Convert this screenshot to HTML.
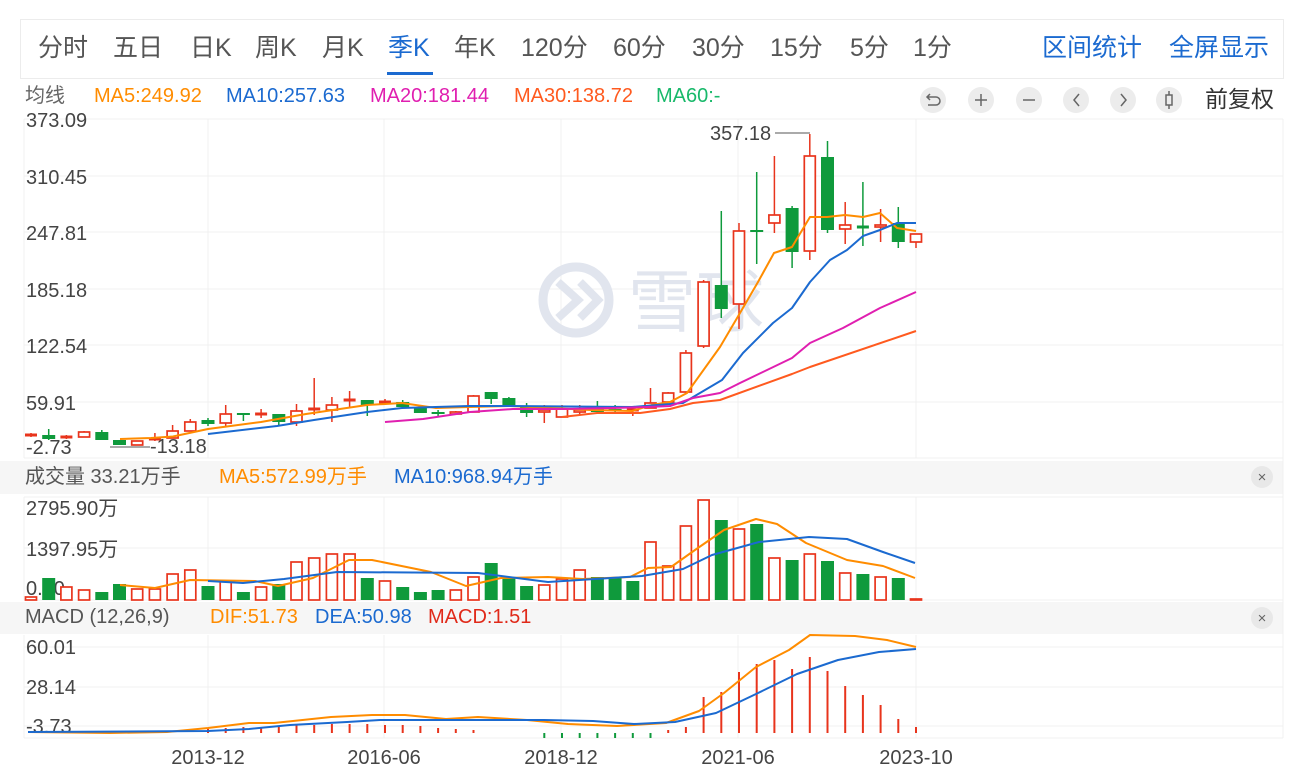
<!DOCTYPE html>
<html><head><meta charset="utf-8">
<style>
body{margin:0;width:1303px;height:768px;background:#fff;overflow:hidden;position:relative;font-family:"Liberation Sans","Noto Sans CJK SC",sans-serif;}
.t{position:absolute;white-space:nowrap;line-height:1.15;}
.tab{top:34px;font-size:25px;color:#555;}
.lg{top:85px;font-size:20px;}
</style></head><body>
<div style="position:absolute;left:20px;top:19px;width:1262px;height:58px;border:1px solid #ececec;"></div>
<div class="t tab" style="left:38px;">分时</div>
<div class="t tab" style="left:113px;">五日</div>
<div class="t tab" style="left:190px;">日K</div>
<div class="t tab" style="left:255px;">周K</div>
<div class="t tab" style="left:322px;">月K</div>
<div class="t tab" style="left:388px;color:#1b6ad0;">季K</div>
<div style="position:absolute;left:387px;top:72px;width:46px;height:3px;background:#1b6ad0;"></div>
<div class="t tab" style="left:454px;">年K</div>
<div class="t tab" style="left:521px;">120分</div>
<div class="t tab" style="left:613px;">60分</div>
<div class="t tab" style="left:692px;">30分</div>
<div class="t tab" style="left:770px;">15分</div>
<div class="t tab" style="left:850px;">5分</div>
<div class="t tab" style="left:913px;">1分</div>
<div class="t tab" style="left:1042px;color:#1b6ad0;">区间统计</div>
<div class="t tab" style="left:1169px;color:#1b6ad0;">全屏显示</div>

<div class="t lg" style="left:25px;color:#666;">均线</div>
<div class="t lg" style="left:94px;color:#ff8c00;">MA5:249.92</div>
<div class="t lg" style="left:226px;color:#1b6ad0;">MA10:257.63</div>
<div class="t lg" style="left:370px;color:#e01fb0;">MA20:181.44</div>
<div class="t lg" style="left:514px;color:#ff5a1f;">MA30:138.72</div>
<div class="t lg" style="left:656px;color:#19b96b;">MA60:-</div>
<div class="t" style="top:86px;left:1205px;font-size:23px;color:#333;">前复权</div>

<div style="position:absolute;left:0;top:461px;width:1283px;height:33px;background:#f6f6f6;"></div>
<div class="t" style="top:466px;left:25px;font-size:20px;color:#555;">成交量 33.21万手</div>
<div class="t" style="top:466px;left:219px;font-size:20px;color:#ff8c00;">MA5:572.99万手</div>
<div class="t" style="top:466px;left:394px;font-size:20px;color:#1b6ad0;">MA10:968.94万手</div>
<div style="position:absolute;left:0;top:602px;width:1283px;height:32px;background:#f6f6f6;"></div>
<div class="t" style="top:606px;left:25px;font-size:20px;color:#555;">MACD (12,26,9)</div>
<div class="t" style="top:606px;left:210px;font-size:20px;color:#ff8c00;">DIF:51.73</div>
<div class="t" style="top:606px;left:315px;font-size:20px;color:#1b6ad0;">DEA:50.98</div>
<div class="t" style="top:606px;left:428px;font-size:20px;color:#e02a1a;">MACD:1.51</div>

<svg id="s" width="1303" height="768" style="position:absolute;left:0;top:0" xmlns="http://www.w3.org/2000/svg"></svg>
<script>
var s=document.getElementById('s'),h='';
function L(x1,y1,x2,y2,c,w){h+='<line x1="'+x1+'" y1="'+y1+'" x2="'+x2+'" y2="'+y2+'" stroke="'+c+'" stroke-width="'+(w||1)+'"/>';}
function P(pts,c,w){h+='<polyline fill="none" stroke="'+c+'" stroke-width="'+(w||2)+'" stroke-linejoin="round" points="'+pts.map(function(p){return p.join(',')}).join(' ')+'"/>';}
function T(x,y,t,sz,c,a){h+='<text x="'+x+'" y="'+y+'" font-size="'+sz+'" fill="'+c+'" '+(a?'text-anchor="'+a+'"':'')+' font-family="Liberation Sans,Noto Sans CJK SC,sans-serif">'+t+'</text>';}
var g='#f0f0f0';
[119,176,232,289,345,402,458].forEach(function(y){L(24,y,1283,y,g);});
[208,384,561,738,916].forEach(function(x){L(x,119,x,458,g);L(x,497,x,600,g);L(x,635,x,738,g);});
L(24,119,24,458,g);L(24,497,24,600,g);L(24,635,24,738,g);
L(1283,119,1283,738,g);
[497,548,600].forEach(function(y){L(24,y,1283,y,g);});
[647,687,726,738].forEach(function(y){L(24,y,1283,y,g);});
h+='<circle cx="576" cy="300" r="33" fill="none" stroke="#e1e5ee" stroke-width="9"/>';
h+='<path d="M558 282 L578 300 L558 318 M580 282 L598 300 L580 318" fill="none" stroke="#e1e5ee" stroke-width="8"/>';
T(628,326,'雪球',68,'#e1e5ee');
var lb=[['373.09',125],['310.45',182],['247.81',238],['185.18',295],['122.54',351],['59.91',408],['-2.73',452]];
lb.forEach(function(a){T(26,a[1]+2,a[0],20,'#444');});
var X=function(i){return 916-(50-i)*17.7;};
var C=[[435,435,433,437],[435,439,429,440,1],[437,437,435,439],[437,432,431,437],[432,440,430,440,1],[440,445,440,445,1],[445,441,441,445],[439,439,433,441],[438,431,425,438],[431,422,419,431],
[420,424,418,426,1],[423,414,405,426],[413,415,413,421,1],[414,414,409,418],[414,422,414,426,1],[422,411,404,426],[409,409,378,415],[410,405,397,422],[400,400,391,407],[400,405,400,416,1],
[402,402,399,405],[402,407,400,407,1],[408,413,408,413,1],[412,414,410,416,1],[414,412,411,415],[412,396,395,412],[392,399,392,404,1],[398,405,397,407,1],[406,413,403,417,1],[412,410,405,423],
[417,409,405,417],[412,410,405,415],[409,412,401,413,1],[409,411,405,412,1],[411,410,408,416],[408,403,388,408],[402,393,392,403],[392,353,350,393],[346,282,280,348],[285,309,211,318,1],
[304,231,223,329],[230,232,172,264,1],[223,215,156,233],[208,252,206,268,1],[251,156,134,260],[157,230,141,233,1],[229,225,202,244],[227,227,182,246,1],[227,225,209,242],[223,242,207,248,1],[242,234,234,248]];
C.forEach(function(c,i){var x=X(i),gr=c[4],col=gr?'#0f9a3c':'#e8341c',top=Math.min(c[0],c[1]),bh=Math.abs(c[0]-c[1]);
L(x,c[2],x,top,col,1.5);L(x,top+bh,x,c[3],col,1.5);
if(bh<2){L(x-6,top,x+6,top,col,3);}else if(gr){h+='<rect x="'+(x-6.5)+'" y="'+top+'" width="13" height="'+bh+'" fill="'+col+'"/>';}
else{h+='<rect x="'+(x-5.5)+'" y="'+top+'" width="11" height="'+bh+'" fill="#fff" stroke="'+col+'" stroke-width="1.7"/>';}});
T(710,140,'357.18',20,'#444');L(775,133,810,133,'#555');
L(110,447,150,447,'#555');T(150,453,'-13.18',20,'#444');
P([[120,439],[151,438],[173,436.5],[208,429],[261,422],[306,414],[367,405],[402,403],[436,408],[469,407],[510,406],[551,408],[591,410],[632,411],[652,405],[670,402],[687,393],[720,347],[740,313],[758,282],[774,253],[792,247],[810,217],[827,217],[845,215],[863,217],[880,213],[897,228],[916,231]],'#ff8c00');
P([[208,434],[277,426],[314,420],[367,412],[402,408],[469,406],[510,406],[632,407],[683,403],[722,380],[743,353],[773,323],[792,308],[810,282],[830,260],[847,250],[863,236],[880,230],[897,223],[916,223]],'#1b6ad0');
P([[385,422],[423,419],[470,412],[513,409],[562,409],[613,408],[647,407],[670,406],[693,398],[720,393],[740,383],[792,358],[810,343],[843,328],[880,308],[916,292]],'#e01fb0');
P([[562,417],[597,413],[640,413],[670,409],[693,403],[720,400],[792,374],[810,367],[916,331]],'#ff5a1f');
T(26,515,'2795.90万',20,'#444');T(26,556,'1397.95万',20,'#444');T(26,595,'0.00',20,'#444');
var V=[597,578,587,590,592,584,589,589,574,570,586,581,592,587,584,562,558,554,554,578,581,587,592,590,590,577,563,578,586,585,579,570,577,577,581,542,566,526,500,520,529,524,558,560,554,561,573,574,577,578,599];
var VG={1:1,4:1,5:1,10:1,12:1,14:1,19:1,21:1,22:1,23:1,26:1,27:1,28:1,32:1,33:1,34:1,39:1,41:1,43:1,45:1,47:1,49:1};
V.forEach(function(v,i){var x=X(i);if(VG[i]||C[i][4])h+='<rect x="'+(x-6.5)+'" y="'+v+'" width="13" height="'+(600-v)+'" fill="#0f9a3c"/>';else h+='<rect x="'+(x-5.5)+'" y="'+v+'" width="11" height="'+(600-v)+'" fill="#fff" stroke="#e8341c" stroke-width="1.7"/>';});
P([[120,585],[155,588],[190,580],[255,581],[278,586],[313,578],[349,560],[372,560],[431,572],[466,586],[501,578],[548,577],[583,579],[630,577],[648,568],[671,567],[695,550],[724,530],[756,519],[777,524],[806,543],[847,560],[883,566],[915,578]],'#ff8c00');
P([[208,581],[243,583],[284,579],[337,572],[478,573],[548,582],[642,576],[683,569],[712,555],[759,542],[809,537],[847,539],[883,552],[915,563]],'#1b6ad0');
T(26,654,'60.01',20,'#444');T(26,694,'28.14',20,'#444');T(26,733,'-3.73',20,'#444');
var M={10:729,11:728,12:727,13:727,14:726,15:725,16:725,17:724,18:724,19:724,20:725,21:725,22:726,23:728,24:729,25:730,36:730,37:727,38:697,39:692,40:672,41:664,42:660,43:669,44:657,45:671,46:686,47:695,48:705,49:719,50:727};
for(var i=0;i<51;i++){var x=X(i);if(M[i])L(x,M[i],x,733,'#e8341c',2);else if(i>=29&&i<=35)L(x,733,x,738,'#0f9a3c',2);}
P([[28,732],[110,733],[167,732],[208,728],[249,723],[274,723],[331,717],[372,715],[405,715],[446,719],[478,717],[527,720],[568,724],[617,726],[666,723],[699,711],[724,693],[756,667],[789,650],[810,635],[855,636],[887,640],[916,647]],'#ff8c00');
P([[28,732],[208,731],[249,729],[290,725],[347,722],[380,720],[446,720],[544,720],[593,721],[634,724],[675,722],[716,713],[756,694],[797,674],[838,660],[879,652],[916,649]],'#1b6ad0');
[['2013-12',208],['2016-06',384],['2018-12',561],['2021-06',738],['2023-10',916]].forEach(function(a){T(a[1],764,a[0],20,'#444','middle');});
[933,981,1029,1076,1123,1169].forEach(function(x){h+='<circle cx="'+x+'" cy="100" r="13" fill="#ececec"/>';});
h+='<path d="M928 97 h8 a4 4 0 0 1 0 8 h-8 M930 94 l-3 3 l3 3" fill="none" stroke="#666" stroke-width="1.5"/>';
L(975,100,987,100,'#666',1.5);L(981,94,981,106,'#666',1.5);L(1023,100,1035,100,'#666',1.5);
h+='<path d="M1079 94 l-5 6 l5 6 M1121 94 l5 6 l-5 6" fill="none" stroke="#666" stroke-width="1.5"/>';
h+='<rect x="1166" y="95" width="6" height="10" fill="none" stroke="#666" stroke-width="1.5"/>';L(1169,91,1169,95,'#666',1.5);L(1169,105,1169,109,'#666',1.5);
[477,618].forEach(function(y){h+='<circle cx="1262" cy="'+y+'" r="11" fill="#e8e8e8"/>';T(1262,y+5,'×',15,'#666','middle');});
s.innerHTML=h;
</script>
</body></html>
